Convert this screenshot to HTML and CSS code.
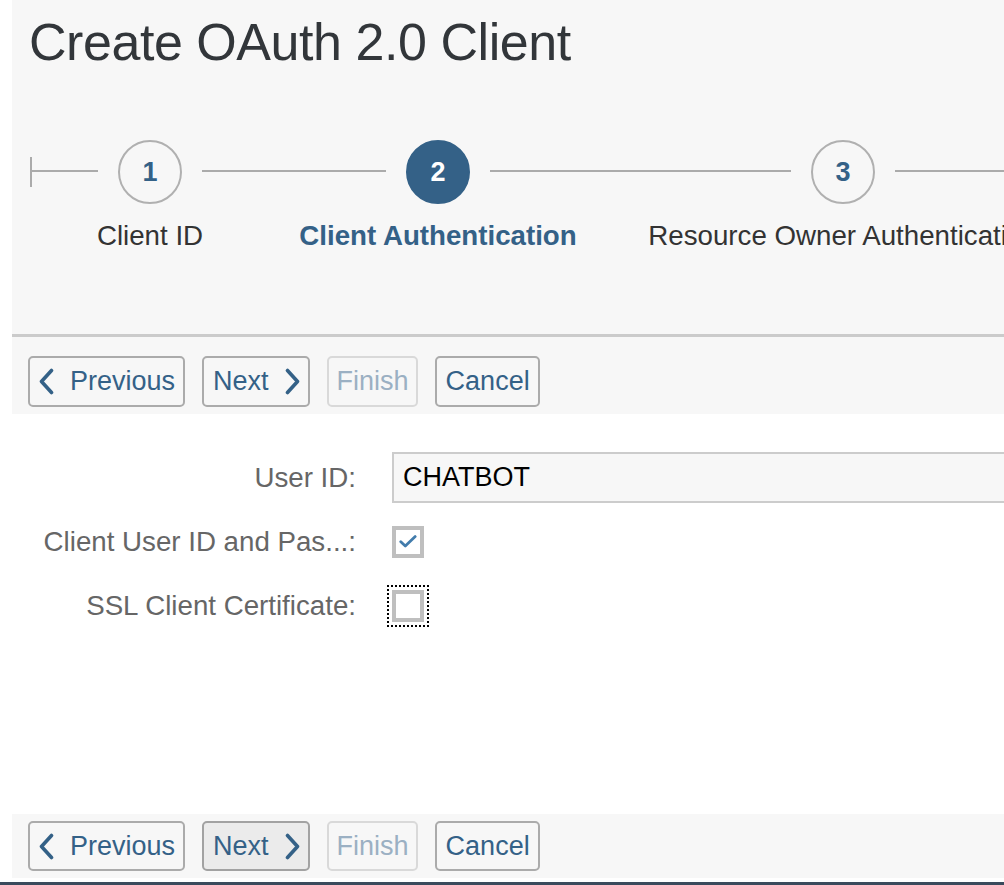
FILE: index.html
```html
<!DOCTYPE html>
<html lang="en">
<head>
<meta charset="utf-8">
<title>Create OAuth 2.0 Client</title>
<link rel="stylesheet" href="styles.css">
</head>
<body>
<div class="app">
  <div class="main">
    <header class="header">
      <h1 class="title">Create OAuth 2.0 Client</h1>
      <div class="stepper">
        <span class="tick"></span>
        <span class="line line-start"></span>
        <div class="step">
          <span class="circle">1</span>
          <span class="step-label">Client ID</span>
        </div>
        <span class="line line-a"></span>
        <div class="step step-current">
          <span class="circle">2</span>
          <span class="step-label">Client Authentication</span>
        </div>
        <span class="line line-b"></span>
        <div class="step">
          <span class="circle">3</span>
          <span class="step-label">Resource Owner Authentication</span>
        </div>
        <span class="line line-end"></span>
      </div>
    </header>

    <div class="toolbar toolbar-top">
      <button class="btn" type="button">
        <svg class="chev" viewBox="0 0 15 27" aria-hidden="true"><polyline points="12.5,2.5 2.5,13.5 12.5,24.5"/></svg>
        <span>Previous</span>
      </button>
      <button class="btn" type="button">
        <span>Next</span>
        <svg class="chev" viewBox="0 0 15 27" aria-hidden="true"><polyline points="2.5,2.5 12.5,13.5 2.5,24.5"/></svg>
      </button>
      <button class="btn btn-disabled" type="button" disabled><span>Finish</span></button>
      <button class="btn" type="button"><span>Cancel</span></button>
    </div>

    <form class="form">
      <label class="form-label" for="uid">User ID:</label>
      <div class="form-field"><input id="uid" class="text-input" type="text" value="CHATBOT"></div>

      <label class="form-label">Client User ID and Pas...:</label>
      <div class="form-field"><span class="checkbox checked"><svg viewBox="0 0 18 13" aria-hidden="true"><polyline points="1.8,6.8 6.3,11 16.2,1.6"/></svg></span></div>

      <label class="form-label">SSL Client Certificate:</label>
      <div class="form-field"><span class="checkbox focused"></span></div>
    </form>

    <div class="toolbar toolbar-bottom">
      <button class="btn" type="button">
        <svg class="chev" viewBox="0 0 15 27" aria-hidden="true"><polyline points="12.5,2.5 2.5,13.5 12.5,24.5"/></svg>
        <span>Previous</span>
      </button>
      <button class="btn btn-hover" type="button">
        <span>Next</span>
        <svg class="chev" viewBox="0 0 15 27" aria-hidden="true"><polyline points="2.5,2.5 12.5,13.5 2.5,24.5"/></svg>
      </button>
      <button class="btn btn-disabled" type="button" disabled><span>Finish</span></button>
      <button class="btn" type="button"><span>Cancel</span></button>
    </div>
    <div class="bottom-gap"></div>
  </div>
  <div class="footer-line"></div>
</div>
</body>
</html>
```

FILE: styles.css
```css
html, body {
  margin: 0;
  padding: 0;
  overflow: hidden;
  background: #ffffff;
}

body {
  font-family: "Liberation Sans", Arial, sans-serif;
  color: #333333;
}

.app {
  width: 1004px;
  height: 885px;
  overflow: hidden;
}

.main {
  margin-left: 12px;
}

/* Header */
.header {
  box-sizing: border-box;
  height: 337px;
  background: #f7f7f7;
  border-bottom: 3px solid #cbcbcb;
  padding-left: 17px;
  overflow: hidden;
}

.title {
  margin: 0;
  padding-top: 10px;
  font-size: 52px;
  line-height: 64px;
  font-weight: 400;
  letter-spacing: -0.45px;
  color: #32363a;
  white-space: nowrap;
}

.stepper {
  display: flex;
  align-items: flex-start;
  margin-top: 66px;
  white-space: nowrap;
}

.tick {
  flex: none;
  width: 2px;
  height: 30px;
  margin-left: 1px;
  margin-top: 17px;
  background: #ababab;
}

.line {
  flex: none;
  height: 2px;
  margin-top: 30px;
  background: #ababab;
}

.line-start { width: 66px; margin-right: 20px; }
.line-a { width: 184px; margin: 30px 20px 0; }
.line-b { width: 301px; margin: 30px 20px 0; }
.line-end { width: 300px; margin-left: 20px; }

.step {
  flex: none;
  width: 64px;
  display: flex;
  flex-direction: column;
  align-items: center;
}

.circle {
  box-sizing: border-box;
  width: 64px;
  height: 64px;
  border-radius: 50%;
  border: 2px solid #b0b0b0;
  display: flex;
  align-items: center;
  justify-content: center;
  font-size: 27px;
  font-weight: 700;
  color: #346187;
}

.step-current .circle {
  background: #346187;
  border-color: #346187;
  color: #ffffff;
}

.step-label {
  margin-top: 16px;
  font-size: 27.7px;
  line-height: 32px;
  color: #333333;
  white-space: nowrap;
}

.step-current .step-label {
  font-weight: 700;
  color: #346187;
}

/* Toolbars */
.toolbar {
  box-sizing: border-box;
  display: flex;
  align-items: flex-start;
  gap: 17px;
  background: #f7f7f7;
  padding-left: 16px;
}

.toolbar-top {
  height: 77px;
  padding-top: 19px;
}

.toolbar-bottom {
  height: 64px;
  padding-top: 7px;
}

.btn {
  box-sizing: border-box;
  height: 51px;
  display: flex;
  align-items: center;
  gap: 16px;
  padding: 0 8px 0 9px;
  border: 2px solid #ababab;
  border-radius: 5px;
  background: transparent;
  font-family: "Liberation Sans", Arial, sans-serif;
  font-size: 27px;
  color: #346187;
  cursor: pointer;
}

.toolbar-bottom .btn { height: 50px; }

.btn-hover {
  background: #ebebeb;
  border-color: #a2a2a2;
}

.btn-disabled {
  padding: 0 7px 0 8px;
  border-color: #d9d9d9;
  color: #9bb0c3;
  cursor: default;
}

.chev {
  width: 15px;
  height: 27px;
  flex: none;
}

.chev polyline {
  fill: none;
  stroke: #346187;
  stroke-width: 3.6;
  stroke-linecap: round;
  stroke-linejoin: round;
}

/* Form */
.form {
  box-sizing: border-box;
  height: 400px;
  margin: 0;
  padding-top: 38px;
  display: grid;
  grid-template-columns: 344px 1fr;
  grid-auto-rows: 51px;
  column-gap: 36px;
  row-gap: 13px;
  align-content: start;
}

.form-label {
  align-self: center;
  justify-self: end;
  font-size: 27.7px;
  line-height: 32px;
  color: #666666;
  white-space: nowrap;
}

.form-field {
  display: flex;
  align-items: center;
}

.text-input {
  box-sizing: border-box;
  width: calc(100% + 20px);
  height: 51px;
  flex: none;
  border: 2px solid #cccccc;
  background: #f7f7f7;
  padding: 0 0 0 9px;
  font-family: "Liberation Sans", Arial, sans-serif;
  font-size: 27px;
  color: #000000;
  outline: none;
}

.checkbox {
  box-sizing: border-box;
  width: 32px;
  height: 32px;
  border: 4px solid #bfbfbf;
  background: #ffffff;
  display: flex;
  align-items: center;
  justify-content: center;
}

.checkbox svg {
  width: 18px;
  height: 13px;
}

.checkbox svg polyline {
  fill: none;
  stroke: #427cac;
  stroke-width: 2.8;
  stroke-linecap: round;
  stroke-linejoin: round;
}

.checkbox.focused {
  outline: 2px dotted #000000;
  outline-offset: 3px;
}

.bottom-gap {
  height: 4px;
  background: #ffffff;
}

.footer-line {
  height: 3px;
  background: #3a4a5c;
}
```
